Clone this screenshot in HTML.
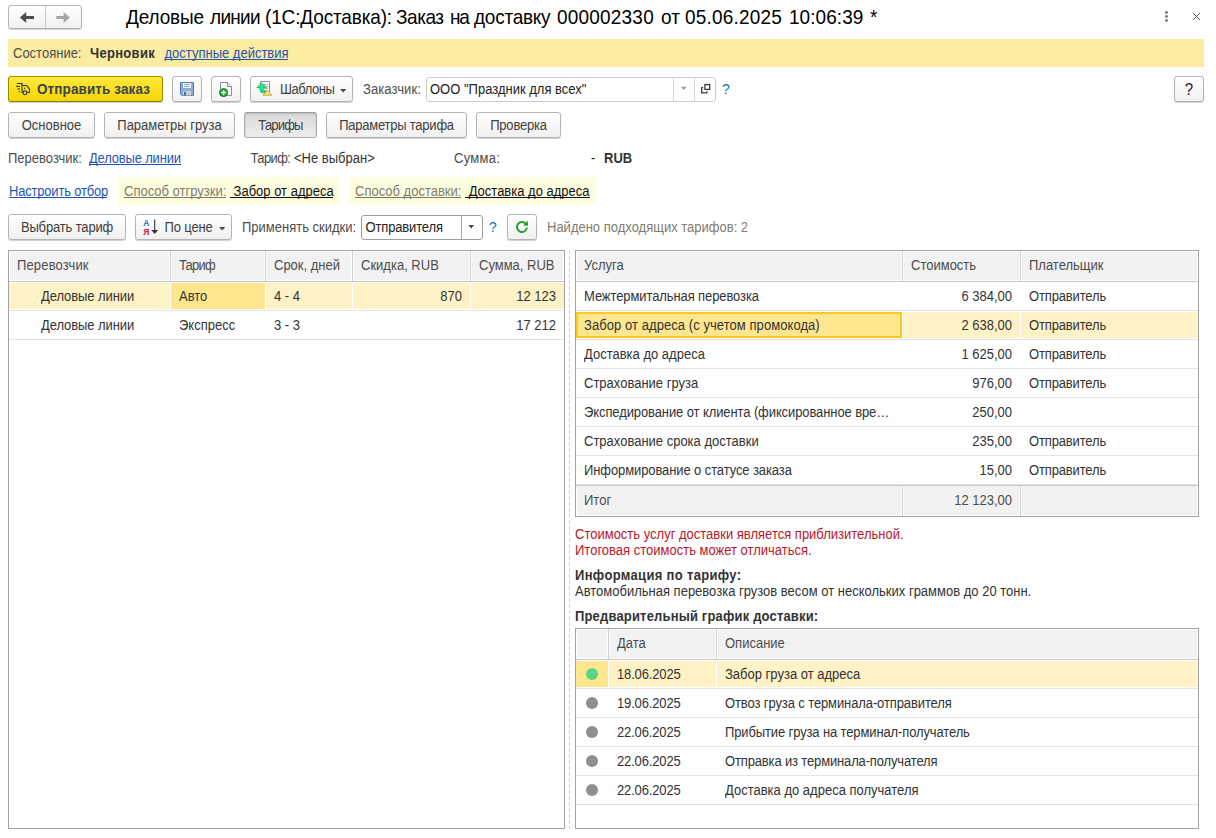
<!DOCTYPE html>
<html lang="ru">
<head>
<meta charset="utf-8">
<title>Деловые линии (1С:Доставка)</title>
<style>
*{box-sizing:border-box;margin:0;padding:0}
html,body{width:1216px;height:838px;overflow:hidden;background:#fff}
body{font-family:"Liberation Sans",Arial,sans-serif;font-size:13px;color:#333;position:relative}
.abs{position:absolute}
.t{position:absolute;white-space:nowrap;line-height:16px;height:16px}
.btn{position:absolute;border:1px solid #b3b3b3;border-radius:3px;background:linear-gradient(#ffffff,#f0f0f0);box-shadow:0 1px 0 rgba(0,0,0,.18);color:#404040;text-align:center;white-space:nowrap;line-height:24px;font-size:13px}
.btn.pressed{background:linear-gradient(#dadada,#ededed);border-color:#9c9c9c #a9a9a9 #b3b3b3;box-shadow:inset 0 1px 2px rgba(0,0,0,.16)}
a,.lnk{color:#1f55b3}
.ul{position:absolute;height:1px}
.gray{color:#807d72}
.r{text-align:right}
.t{transform:scaleY(1.06);transform-origin:0 1px}
.s{display:inline-block;transform:scaleY(1.06)}
.btn .s{transform-origin:0 5px}
#title{transform:translateY(0.5px) scaleY(1.045);transform-origin:0 18.4px}
#title span{position:absolute;top:0}
</style>
</head>
<body>

<!-- nav buttons -->
<div class="btn" style="left:8px;top:5px;width:74px;height:24px"></div>
<div class="abs" style="left:45px;top:6px;width:1px;height:22px;background:#c8c8c8"></div>
<svg class="abs" style="left:8px;top:5px" width="75" height="24" viewBox="0 0 75 24">
  <path d="M11.9 12.4 L18.2 6.9 V10.9 H26 V13.9 H18.2 V18 Z" fill="#4d4d4d"/>
  <path d="M61.9 12.4 L55.6 6.9 V10.9 H48.2 V13.9 H55.6 V18 Z" fill="#a6a6a6"/>
</svg>

<!-- title -->
<div class="t" id="title" style="left:126px;top:6px;font-size:19px;line-height:24px;height:24px;color:#000;width:760px"><span style="left:0px;letter-spacing:-0.15px">Деловые</span> <span style="left:84px;letter-spacing:-0.7px">линии</span> <span style="left:139px;letter-spacing:-0.15px">(1С:Доставка):</span> <span style="left:270px;letter-spacing:-0.45px">Заказ</span> <span style="left:324px;letter-spacing:-1.2px">на</span> <span style="left:348px;letter-spacing:-0.25px">доставку</span> <span style="left:431px;letter-spacing:0.2px">000002330</span> <span style="left:535px;letter-spacing:0.0px">от</span> <span style="left:559px;letter-spacing:0.2px">05.06.2025</span> <span style="left:663px;letter-spacing:0.05px">10:06:39</span> <span style="left:744px;letter-spacing:0px">*</span></div>

<!-- window icons -->
<svg class="abs" style="left:1160px;top:8px" width="46" height="18" viewBox="0 0 46 18">
  <circle cx="6.5" cy="4.5" r="1.4" fill="#777"/><circle cx="6.5" cy="8.5" r="1.4" fill="#777"/><circle cx="6.5" cy="12.5" r="1.4" fill="#777"/>
  <path d="M33 5 L40 12 M40 5 L33 12" stroke="#555" stroke-width="1" fill="none"/>
</svg>

<!-- status bar -->
<div class="abs" style="left:8px;top:39px;width:1196px;height:28px;background:#fbeca1"></div>
<div class="t" style="left:13px;top:44.5px;color:#4d4d4d">Состояние:</div>
<div class="t" style="left:90px;top:44.5px;font-weight:bold;letter-spacing:0.3px">Черновик</div>
<div class="t lnk" style="left:164.5px;top:44.5px">доступные действия</div>
<div class="ul" style="left:165px;top:59px;width:123px;background:#1f55b3"></div>


<!-- toolbar -->
<div class="btn" id="send" style="left:8px;top:76px;width:155px;height:26px;background:linear-gradient(#ffe93a,#f3d600);border-color:#a39100 #9c8a00 #8f7e00;font-weight:bold;color:#3c4353;font-size:13.5px;text-align:left;padding-left:28px;letter-spacing:0.1px"><span class="s">Отправить заказ</span></div>
<svg class="abs" style="left:14px;top:80px" width="18" height="18" viewBox="0 0 18 18" fill="none" stroke="#2b3350" stroke-width="1.1">
  <path d="M3 3.5 H8 V12.5 H9"/>
  <path d="M8 5.5 H12.6 L15.4 9 V12.5 H13"/>
  <circle cx="10.9" cy="12.8" r="1.9" fill="#ffe21a"/>
  <path d="M2 6.4 H6" stroke-width="1.3" stroke="#5a5a3a"/>
  <path d="M3.4 9 H6" stroke-width="1.3" stroke="#5a5a3a"/>
  <path d="M4.6 11.6 H6" stroke-width="1.2" stroke="#5a5a3a"/>
  <circle cx="10.6" cy="8.3" r="0.7" fill="#2b3350" stroke="none"/>
</svg>
<div class="btn" style="left:172px;top:76px;width:30px;height:26px"></div>
<svg class="abs" style="left:180px;top:82px" width="14" height="14" viewBox="0 0 14 14">
  <path d="M0.5 0.5 H13.5 V13.5 H1.8 L0.5 12.2 Z" fill="#88aee0" stroke="#4a72ad" stroke-width="0.9"/>
  <rect x="3" y="1" width="8" height="5" fill="#fff"/>
  <rect x="4" y="2" width="6" height="1" fill="#88aee0"/><rect x="4" y="4" width="6" height="1" fill="#88aee0"/>
  <rect x="3" y="9" width="8" height="4.5" fill="#c9d0cf"/>
  <rect x="4" y="10" width="2" height="3.5" fill="#3f6cb0"/>
</svg>
<div class="btn" style="left:211px;top:76px;width:30px;height:26px"></div>
<svg class="abs" style="left:218px;top:81px" width="16" height="17" viewBox="0 0 16 17">
  <path d="M2.5 1.5 H9.5 L13.5 5.5 V14.5 H2.5 Z" fill="#fff" stroke="#71809c" stroke-width="0.9"/>
  <path d="M9.5 1.5 V5.5 H13.5" fill="#eef2fa" stroke="#71809c" stroke-width="0.9"/>
  <circle cx="5.6" cy="11.6" r="4.4" fill="#1f9a2e"/>
  <circle cx="5.6" cy="11.6" r="3.9" fill="none" stroke="#16851f" stroke-width="0.8"/>
  <path d="M5.6 9 V14.2 M3 11.6 H8.2" stroke="#fff" stroke-width="1.5"/>
</svg>
<div class="btn" style="left:250px;top:76px;width:103px;height:26px;text-align:left;padding-left:29px"><span class="s" style="letter-spacing:-0.45px">Шаблоны</span></div>
<svg class="abs" style="left:256px;top:80px" width="18" height="18" viewBox="0 0 18 18">
  <path d="M4.5 1.5 H13.5 V11.5 H4.5 Z" fill="#fff" stroke="#8093ad" stroke-width="1"/>
  <path d="M8 4.5 H12 M8 6.5 H12 M8 8.5 H12" stroke="#a9b4c6" stroke-width="1"/>
  <path d="M5.6 2.9 L10.5 7.6 H7.2 V8.8 Q7.2 10.5 9 10.7 L11.2 10.9 V12.9 H7.6 Q3.9 12.9 3.9 9.4 V7.6 H0.9 Z" fill="#25e68a" stroke="#17a552" stroke-width="0.7"/>
  <path d="M7 15.2 L11.3 10.5 L15.7 15.2 Z" fill="#f8e47c" stroke="#c9a227" stroke-width="0.9" stroke-linejoin="round"/>
</svg>
<svg class="abs" style="left:340px;top:89px" width="7" height="4" viewBox="0 0 7 4"><path d="M0 0 H6.4 L3.2 3.4 Z" fill="#4a4a4a"/></svg>
<div class="t" style="left:363px;top:81px;letter-spacing:0.1px;color:#4d4d4d">Заказчик:</div>
<div class="abs" style="left:426px;top:77px;width:290px;height:25px;border:1px solid #cdcdcd;border-radius:3px;background:#fff"></div>
<div class="abs" style="left:673px;top:78px;width:1px;height:23px;background:#d6d6d6"></div>
<div class="abs" style="left:694px;top:78px;width:1px;height:23px;background:#d6d6d6"></div>
<svg class="abs" style="left:680px;top:86px" width="8" height="5" viewBox="0 0 8 5"><path d="M0.8 0.8 H6.6 L3.7 4 Z" fill="#9a9a9a"/></svg>
<svg class="abs" style="left:700px;top:83px" width="12" height="12" viewBox="0 0 12 12" fill="none" stroke="#3c3c3c" stroke-width="1.3">
  <rect x="4.9" y="1.6" width="4.8" height="4.8"/>
  <path d="M3.2 4.6 H1.7 V9.8 H6.9 V8.2"/>
</svg>
<div class="t" style="left:430px;top:81px;color:#222">ООО "Праздник для всех"</div>
<div class="t" style="left:722px;top:80px;color:#1270cc;font-size:14px">?</div>
<div class="btn" style="left:1174px;top:76px;width:30px;height:26px;font-size:15px;color:#1a1a1a"><span class="s">?</span></div>

<!-- tabs -->
<div class="btn" style="left:8px;top:112px;width:87px;height:26px"><span class="s">Основное</span></div>
<div class="btn" style="left:104px;top:112px;width:131px;height:26px"><span class="s">Параметры груза</span></div>
<div class="btn pressed" style="left:244px;top:112px;width:73px;height:26px"><span class="s" style="letter-spacing:-0.8px">Тарифы</span></div>
<div class="btn" style="left:326px;top:112px;width:141px;height:26px"><span class="s" style="letter-spacing:-0.23px">Параметры тарифа</span></div>
<div class="btn" style="left:476px;top:112px;width:85px;height:26px"><span class="s" style="letter-spacing:-0.2px">Проверка</span></div>

<!-- info row -->
<div class="t" style="left:8px;top:150px;color:#4d4d4d">Перевозчик:</div>
<div class="t lnk" style="left:89px;top:150px;letter-spacing:-0.18px">Деловые линии</div>
<div class="ul" style="left:89px;top:164px;width:92px;background:#1f55b3"></div>

<div class="t" style="left:250.5px;top:150px;letter-spacing:-0.6px;color:#4d4d4d">Тариф:</div>
<div class="t" style="left:294px;top:150px">&lt;Не выбран&gt;</div>
<div class="t" style="left:454px;top:150px;letter-spacing:0.3px;color:#4d4d4d">Сумма:</div>
<div class="t" style="left:591px;top:150px">-</div>
<div class="t" style="left:604px;top:150px;font-weight:bold">RUB</div>

<!-- filter row -->
<div class="t lnk" style="left:9px;top:183px;letter-spacing:-0.2px">Настроить отбор</div>
<div class="ul" style="left:9px;top:197px;width:98px;background:#1f55b3"></div>

<div class="abs" style="left:118px;top:177px;width:221px;height:28px;background:#fffde0"></div>
<div class="t" style="left:124px;top:183px;color:#111"><span class="gray">Способ отгрузки:</span>&nbsp; Забор от адреса</div>
<div class="ul" style="left:124px;top:197px;width:102px;background:#7d7a62"></div>
<div class="ul" style="left:230px;top:197px;width:103px;background:#111"></div>

<div class="abs" style="left:349px;top:177px;width:247px;height:28px;background:#fffde0"></div>
<div class="t" style="left:355px;top:183px;color:#111"><span class="gray">Способ доставки:</span>&nbsp; Доставка до адреса</div>
<div class="ul" style="left:355px;top:197px;width:106px;background:#7d7a62"></div>
<div class="ul" style="left:465px;top:197px;width:125px;background:#111"></div>


<!-- third toolbar -->
<div class="btn" style="left:8px;top:214px;width:118px;height:26px"><span class="s" style="letter-spacing:-0.15px">Выбрать тариф</span></div>
<div class="btn" style="left:135px;top:214px;width:97px;height:26px;text-align:left;padding-left:28.5px"><span class="s" style="letter-spacing:-0.15px">По цене</span></div>
<svg class="abs" style="left:141px;top:217px" width="20" height="20" viewBox="0 0 20 20">
  <text x="2.2" y="9" font-family="Liberation Sans, Arial, sans-serif" font-size="8.5" font-weight="bold" fill="#1e7bd0">А</text>
  <text x="2.2" y="17.8" font-family="Liberation Sans, Arial, sans-serif" font-size="8.5" font-weight="bold" fill="#c4202b">Я</text>
  <path d="M13.7 2.6 V15" stroke="#333" stroke-width="1.1" fill="none"/>
  <path d="M10.3 13 H17.1 L13.7 17 Z" fill="#333"/>
</svg>
<svg class="abs" style="left:219px;top:227px" width="7" height="4" viewBox="0 0 7 4"><path d="M0 0 H6.4 L3.2 3.4 Z" fill="#4a4a4a"/></svg>
<div class="t" style="left:242px;top:219px;letter-spacing:0px;color:#4d4d4d">Применять скидки:</div>
<div class="abs" style="left:361px;top:215px;width:122px;height:25px;border:1px solid #9e9e9e;border-radius:3px;background:#fff"></div>
<div class="abs" style="left:461px;top:216px;width:1px;height:23px;background:#a8a8a8"></div>
<svg class="abs" style="left:468px;top:225px" width="7" height="4" viewBox="0 0 7 4"><path d="M0.4 0 H6 L3.2 3.4 Z" fill="#444"/></svg>
<div class="t" style="left:365.5px;top:219px;color:#222;letter-spacing:-0.15px">Отправителя</div>
<div class="t" style="left:489px;top:218px;color:#1270cc;font-size:14px">?</div>
<div class="btn" style="left:507px;top:214px;width:30px;height:26px"></div>
<svg class="abs" style="left:514px;top:219px" width="16" height="16" viewBox="0 0 16 16">
  <path d="M11.6 4.6 A5 5 0 1 0 12.9 8.6" fill="none" stroke="#27a027" stroke-width="2"/>
  <path d="M9.2 6.6 L14.2 6.8 L13.6 1.6 Z" fill="#27a027"/>
</svg>
<div class="t gray" style="left:547px;top:219px;letter-spacing:0px">Найдено подходящих тарифов: 2</div>

<!-- left table -->
<div class="abs" style="left:8px;top:250px;width:557px;height:579px;border:1px solid #a3a3a3;background:#fff"></div>
<div class="abs" style="left:10px;top:252px;width:159px;height:28px;background:#f2f2f2"></div>
<div class="abs" style="left:172px;top:252px;width:92px;height:28px;background:#f2f2f2"></div>
<div class="abs" style="left:267px;top:252px;width:84px;height:28px;background:#f2f2f2"></div>
<div class="abs" style="left:354px;top:252px;width:115px;height:28px;background:#f2f2f2"></div>
<div class="abs" style="left:472px;top:252px;width:91px;height:28px;background:#f2f2f2"></div>
<div class="abs" style="left:170px;top:251px;width:1px;height:30px;background:#cfcfcf"></div>
<div class="abs" style="left:265px;top:251px;width:1px;height:30px;background:#cfcfcf"></div>
<div class="abs" style="left:352px;top:251px;width:1px;height:30px;background:#cfcfcf"></div>
<div class="abs" style="left:470px;top:251px;width:1px;height:30px;background:#cfcfcf"></div>
<div class="abs" style="left:9px;top:281px;width:555px;height:1px;background:#c6c6c6"></div>
<div class="t" style="left:17px;top:257px;color:#4d4d4d;letter-spacing:0.15px">Перевозчик</div>
<div class="t" style="left:179px;top:257px;color:#4d4d4d;letter-spacing:-0.75px">Тариф</div>
<div class="t" style="left:274px;top:257px;color:#4d4d4d">Срок, дней</div>
<div class="t" style="left:361px;top:257px;color:#4d4d4d">Скидка, RUB</div>
<div class="t" style="left:479px;top:257px;color:#4d4d4d">Сумма, RUB</div>
<div class="abs" style="left:9px;top:283px;width:555px;height:26px;background:#fff2c6"></div>
<div class="abs" style="left:170px;top:283px;width:1px;height:26px;background:#fff"></div>
<div class="abs" style="left:265px;top:283px;width:1px;height:26px;background:#fff"></div>
<div class="abs" style="left:352px;top:283px;width:1px;height:26px;background:#fff"></div>
<div class="abs" style="left:470px;top:283px;width:1px;height:26px;background:#fff"></div>
<div class="abs" style="left:171px;top:283px;width:94px;height:26px;background:#fee68f"></div>
<div class="abs" style="left:9px;top:310px;width:555px;height:1px;background:#e4e4e4"></div>
<div class="t" style="left:41px;top:288px;color:#333;letter-spacing:-0.08px">Деловые линии</div>
<div class="t" style="left:179px;top:288px;color:#333">Авто</div>
<div class="t" style="left:274px;top:288px;color:#333">4 - 4</div>
<div class="t" style="right:754px;top:288px;color:#333">870</div>
<div class="t" style="right:660px;top:288px;color:#333">12 123</div>
<div class="abs" style="left:9px;top:339px;width:555px;height:1px;background:#e4e4e4"></div>
<div class="t" style="left:41px;top:317px;color:#333;letter-spacing:-0.08px">Деловые линии</div>
<div class="t" style="left:179px;top:317px;color:#333">Экспресс</div>
<div class="t" style="left:274px;top:317px;color:#333">3 - 3</div>
<div class="t" style="right:660px;top:317px;color:#333">17 212</div>

<!-- splitter -->
<div class="abs" style="left:569px;top:250px;width:1px;height:579px;background:repeating-linear-gradient(to bottom,#d6d6d6 0,#d6d6d6 4px,transparent 4px,transparent 6px)"></div>

<!-- right top table -->
<div class="abs" style="left:575px;top:250px;width:624px;height:267px;border:1px solid #a3a3a3;background:#fff"></div>
<div class="abs" style="left:577px;top:252px;width:324px;height:28px;background:#f2f2f2"></div>
<div class="abs" style="left:904px;top:252px;width:115px;height:28px;background:#f2f2f2"></div>
<div class="abs" style="left:1022px;top:252px;width:175px;height:28px;background:#f2f2f2"></div>
<div class="abs" style="left:902px;top:251px;width:1px;height:30px;background:#cfcfcf"></div>
<div class="abs" style="left:1020px;top:251px;width:1px;height:30px;background:#cfcfcf"></div>
<div class="abs" style="left:576px;top:281px;width:622px;height:1px;background:#c6c6c6"></div>
<div class="t" style="left:584px;top:257px;color:#4d4d4d">Услуга</div>
<div class="t" style="left:911px;top:257px;color:#4d4d4d">Стоимость</div>
<div class="t" style="left:1029px;top:257px;color:#4d4d4d">Плательщик</div>
<div class="abs" style="left:576px;top:310px;width:622px;height:1px;background:#e4e4e4"></div>
<div class="t" style="left:584px;top:288px;color:#333;letter-spacing:-0.1px">Межтермитальная перевозка</div>
<div class="t" style="right:204px;top:288px;color:#333">6 384,00</div>
<div class="t" style="left:1029px;top:288px;color:#333;letter-spacing:-0.15px">Отправитель</div>
<div class="abs" style="left:576px;top:312px;width:622px;height:26px;background:#fff2c6"></div>
<div class="abs" style="left:902px;top:312px;width:1px;height:26px;background:#fff"></div>
<div class="abs" style="left:1020px;top:312px;width:1px;height:26px;background:#fff"></div>
<div class="abs" style="left:576px;top:312px;width:326px;height:26px;background:#fee68f;border:2px solid #f9c81b"></div>
<div class="abs" style="left:576px;top:339px;width:622px;height:1px;background:#e4e4e4"></div>
<div class="t" style="left:584px;top:317px;color:#333;letter-spacing:0.065px">Забор от адреса (с учетом промокода)</div>
<div class="t" style="right:204px;top:317px;color:#333">2 638,00</div>
<div class="t" style="left:1029px;top:317px;color:#333;letter-spacing:-0.15px">Отправитель</div>
<div class="abs" style="left:576px;top:368px;width:622px;height:1px;background:#e4e4e4"></div>
<div class="t" style="left:584px;top:346px;color:#333">Доставка до адреса</div>
<div class="t" style="right:204px;top:346px;color:#333">1 625,00</div>
<div class="t" style="left:1029px;top:346px;color:#333;letter-spacing:-0.15px">Отправитель</div>
<div class="abs" style="left:576px;top:397px;width:622px;height:1px;background:#e4e4e4"></div>
<div class="t" style="left:584px;top:375px;color:#333">Страхование груза</div>
<div class="t" style="right:204px;top:375px;color:#333">976,00</div>
<div class="t" style="left:1029px;top:375px;color:#333;letter-spacing:-0.15px">Отправитель</div>
<div class="abs" style="left:576px;top:426px;width:622px;height:1px;background:#e4e4e4"></div>
<div class="t" style="left:584px;top:404px;color:#333;letter-spacing:-0.1px">Экспедирование от клиента (фиксированное вре…</div>
<div class="t" style="right:204px;top:404px;color:#333">250,00</div>
<div class="abs" style="left:576px;top:455px;width:622px;height:1px;background:#e4e4e4"></div>
<div class="t" style="left:584px;top:433px;color:#333">Страхование срока доставки</div>
<div class="t" style="right:204px;top:433px;color:#333">235,00</div>
<div class="t" style="left:1029px;top:433px;color:#333;letter-spacing:-0.15px">Отправитель</div>
<div class="abs" style="left:576px;top:484px;width:622px;height:1px;background:#e4e4e4"></div>
<div class="t" style="left:584px;top:462px;color:#333;letter-spacing:-0.1px">Информирование о статусе заказа</div>
<div class="t" style="right:204px;top:462px;color:#333">15,00</div>
<div class="t" style="left:1029px;top:462px;color:#333;letter-spacing:-0.15px">Отправитель</div>
<div class="abs" style="left:576px;top:485px;width:622px;height:1px;background:#c6c6c6"></div>
<div class="abs" style="left:577px;top:486px;width:324px;height:29px;background:#f2f2f2"></div>
<div class="abs" style="left:904px;top:486px;width:115px;height:29px;background:#f2f2f2"></div>
<div class="abs" style="left:1022px;top:486px;width:175px;height:29px;background:#f2f2f2"></div>
<div class="abs" style="left:902px;top:486px;width:1px;height:30px;background:#cfcfcf"></div>
<div class="abs" style="left:1020px;top:486px;width:1px;height:30px;background:#cfcfcf"></div>
<div class="t" style="left:584px;top:492px;color:#4d4d4d">Итог</div>
<div class="t" style="right:204px;top:492px;color:#4d4d4d">12 123,00</div>

<!-- texts -->
<div class="t" style="left:575px;top:526px;color:#b8182a">Стоимость услуг доставки является приблизительной.</div>
<div class="t" style="left:575px;top:542px;color:#b8182a">Итоговая стоимость может отличаться.</div>
<div class="t" style="left:575px;top:567px;font-weight:bold;letter-spacing:0.33px">Информация по тарифу:</div>
<div class="t" style="left:575px;top:583px">Автомобильная перевозка грузов весом от нескольких граммов до 20 тонн.</div>
<div class="t" style="left:575px;top:608px;font-weight:bold;letter-spacing:0.17px">Предварительный график доставки:</div>


<!-- bottom table -->
<div class="abs" style="left:575px;top:628px;width:624px;height:201px;border:1px solid #a3a3a3;background:#fff"></div>
<div class="abs" style="left:577px;top:630px;width:30px;height:28px;background:#f2f2f2"></div>
<div class="abs" style="left:610px;top:630px;width:105px;height:28px;background:#f2f2f2"></div>
<div class="abs" style="left:718px;top:630px;width:479px;height:28px;background:#f2f2f2"></div>
<div class="abs" style="left:608px;top:629px;width:1px;height:30px;background:#cfcfcf"></div>
<div class="abs" style="left:716px;top:629px;width:1px;height:30px;background:#cfcfcf"></div>
<div class="abs" style="left:576px;top:659px;width:622px;height:1px;background:#c6c6c6"></div>
<div class="t" style="left:617px;top:635px;color:#4d4d4d">Дата</div>
<div class="t" style="left:725px;top:635px;color:#4d4d4d">Описание</div>
<div class="abs" style="left:576px;top:661px;width:622px;height:26px;background:#fff2c6"></div>
<div class="abs" style="left:608px;top:661px;width:1px;height:26px;background:#fff"></div>
<div class="abs" style="left:716px;top:661px;width:1px;height:26px;background:#fff"></div>
<div class="abs" style="left:576px;top:661px;width:32px;height:26px;background:#fee68f"></div>
<div class="abs" style="left:576px;top:688px;width:622px;height:1px;background:#e4e4e4"></div>
<div class="abs" style="left:586px;top:668px;width:12px;height:12px;border-radius:50%;background:#5bd485"></div>
<div class="t" style="left:617px;top:666px;color:#333;letter-spacing:-0.15px">18.06.2025</div>
<div class="t" style="left:725px;top:666px;color:#333">Забор груза от адреса</div>
<div class="abs" style="left:576px;top:717px;width:622px;height:1px;background:#e4e4e4"></div>
<div class="abs" style="left:586px;top:697px;width:12px;height:12px;border-radius:50%;background:#8f8f8f"></div>
<div class="t" style="left:617px;top:695px;color:#333;letter-spacing:-0.15px">19.06.2025</div>
<div class="t" style="left:725px;top:695px;color:#333;letter-spacing:-0.11px">Отвоз груза с терминала-отправителя</div>
<div class="abs" style="left:576px;top:746px;width:622px;height:1px;background:#e4e4e4"></div>
<div class="abs" style="left:586px;top:726px;width:12px;height:12px;border-radius:50%;background:#8f8f8f"></div>
<div class="t" style="left:617px;top:724px;color:#333;letter-spacing:-0.15px">22.06.2025</div>
<div class="t" style="left:725px;top:724px;color:#333;letter-spacing:-0.125px">Прибытие груза на терминал-получатель</div>
<div class="abs" style="left:576px;top:775px;width:622px;height:1px;background:#e4e4e4"></div>
<div class="abs" style="left:586px;top:755px;width:12px;height:12px;border-radius:50%;background:#8f8f8f"></div>
<div class="t" style="left:617px;top:753px;color:#333;letter-spacing:-0.15px">22.06.2025</div>
<div class="t" style="left:725px;top:753px;color:#333;letter-spacing:-0.15px">Отправка из терминала-получателя</div>
<div class="abs" style="left:576px;top:804px;width:622px;height:1px;background:#e4e4e4"></div>
<div class="abs" style="left:586px;top:784px;width:12px;height:12px;border-radius:50%;background:#8f8f8f"></div>
<div class="t" style="left:617px;top:782px;color:#333;letter-spacing:-0.15px">22.06.2025</div>
<div class="t" style="left:725px;top:782px;color:#333">Доставка до адреса получателя</div>

</body>
</html>
